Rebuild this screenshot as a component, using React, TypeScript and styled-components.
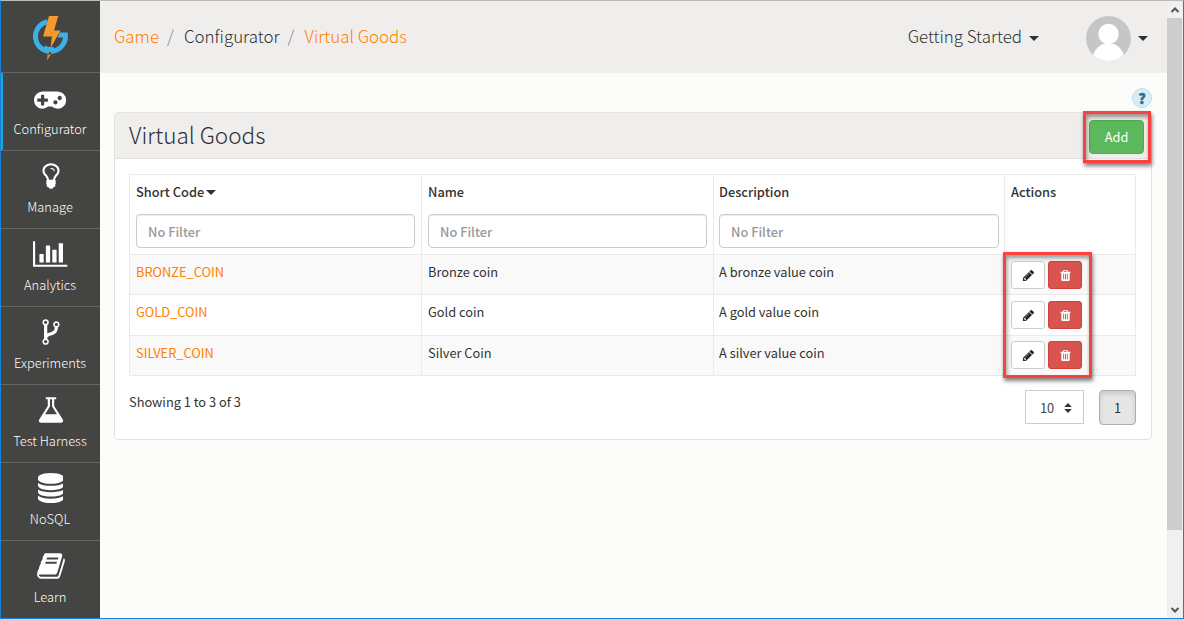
import React from 'react';
import styled, { createGlobalStyle } from 'styled-components';

const Global = createGlobalStyle`
  * { box-sizing: border-box; }
  body {
    margin: 0;
    overflow: hidden;
    font-family: "Noto Sans CJK SC", "Open Sans", sans-serif;
    font-size: 12.8px;
    color: #333;
  }
`;

const Frame = styled.div`
  display: flex;
  width: 1184px;
  height: 619px;
  border: 1px solid #1683d8;
  border-top-color: #bcbab9;
  background: #fcfcfb;
`;

const Sidebar = styled.nav`
  width: 99px;
  flex: none;
  background: #444442;
  overflow: hidden;
`;

const LogoBox = styled.div`
  height: 71px;
  display: flex;
  justify-content: center;
  padding: 13px 0 0;
`;

const NavItem = styled.a<{ $active?: boolean }>`
  height: 78px;
  display: flex;
  flex-direction: column;
  align-items: center;
  border-top: 1px solid #646462;
  padding: 10px 0 0;
  color: #fcfcfb;
  box-shadow: ${p => (p.$active ? 'inset 2px 0 0 #1ba3e0' : 'none')};
  svg { height: 30px; fill: #fff; }
`;

const NavLabel = styled.span`
  font-size: 12.9px;
  line-height: 20px;
  margin: 6px 1px 0 0;
  font-weight: 300;
  white-space: nowrap;
`;

const Main = styled.main`
  flex: 1;
  min-width: 0;
`;

const TopBar = styled.header`
  height: 72px;
  background: #f0eeed;
  display: flex;
  align-items: center;
  justify-content: space-between;
  padding: 0 19px 0 14px;
  font-size: 16.9px;
  font-weight: 300;
`;

const Crumbs = styled.div`
  display: flex;
  line-height: 24px;
  padding-bottom: 2px;
  white-space: pre;
`;

const Crumb = styled.span<{ $link?: boolean }>`
  color: ${p => (p.$link ? '#ff7f00' : '#2c3135')};
`;

const Slash = styled.span`
  color: #888;
  width: 25px;
  padding-left: 8px;
`;

const UserArea = styled.div`
  display: flex;
  align-items: center;
  height: 72px;
  padding-top: 3px;
`;

const StartMenu = styled.div`
  display: flex;
  align-items: center;
  gap: 7px;
  line-height: 24px;
  margin-right: 47px;
  span { padding-bottom: 5px; }
`;

const Caret = styled.i`
  border: 5px solid transparent;
  border-top-color: #2c3135;
  border-bottom: 0;
`;

const Avatar = styled.svg`
  width: 45px;
  height: 45px;
  margin-right: 7px;
`;

const Content = styled.section`
  padding: 15px 15px 0 14px;
`;

const HelpRow = styled.div`
  display: flex;
  justify-content: flex-end;
  height: 24px;
`;

const Help = styled.span`
  width: 20px;
  height: 20px;
  border-radius: 50%;
  border: 1px solid #bce0ef;
  background: #d9edf7;
  color: #31708f;
  font-size: 14px;
  font-weight: 900;
  line-height: 18px;
  text-align: center;
  -webkit-text-stroke: 0.5px #31708f;
`;

const Panel = styled.div`
  height: 328px;
  border: 1px solid #e4e2e1;
  border-radius: 4px;
  background: #fff;
`;

const PanelHead = styled.div`
  height: 46px;
  background: #f0eeed;
  border-bottom: 1px solid #e4e2e1;
  display: flex;
  justify-content: space-between;
  padding: 7px 7px 0 14px;
`;

const Title = styled.h1`
  margin: 0;
  font-size: 22.5px;
  font-weight: 300;
  line-height: 28px;
  color: #2c3135;
`;

const Marked = styled.div`
  position: relative;
  align-self: flex-start;
`;

const Callout = styled.div<{ $box: string }>`
  position: absolute;
  inset: ${p => p.$box};
  border: 3px solid #fb4040;
  box-shadow: 1px 3px 4px rgba(0, 0, 0, 0.5), inset 1px 3px 4px rgba(0, 0, 0, 0.4);
  pointer-events: none;
`;

const AddButton = styled.button`
  display: block;
  width: 55px;
  height: 34px;
  border: 1px solid #4cae4c;
  border-radius: 4px;
  background: #5cb85c;
  color: #fff;
  font: inherit;
  padding: 0 0 2px;
`;

const Body = styled.div`
  padding: 15px 15px 0 14px;
`;

const Table = styled.div`
  position: relative;
  width: 1007px;
  border: 1px solid #eaeaea;
`;

const Row = styled.div<{ $h: number; $odd?: boolean; $first?: boolean }>`
  display: grid;
  grid-template-columns: 291px 292px 291px 131px;
  height: ${p => p.$h}px;
  background: ${p => (p.$odd ? '#f9f9f9' : '#fff')};
  border-top: ${p => (p.$first ? '0' : '1px solid #eaeaea')};
`;

const Cell = styled.div`
  padding: 6px;
  line-height: 22px;
  color: #333;
  & + & { border-left: 1px solid #eaeaea; }
  &:nth-child(3) { padding-left: 5px; padding-right: 5px; }
`;

const HeadLabel = styled.div`
  display: flex;
  align-items: center;
  gap: 2px;
  height: 22px;
  font-weight: 500;
  margin-bottom: 11px;
  white-space: nowrap;
`;

const Filter = styled.input`
  display: block;
  width: 100%;
  height: 34px;
  border: 1px solid #ccc;
  border-radius: 4px;
  padding: 0 11px;
  font: inherit;
  font-weight: 500;
  box-shadow: inset 0 1px 1px rgba(0, 0, 0, 0.075);
  &::placeholder { color: #999; opacity: 1; }
`;

const Code = styled.a`
  color: #ff7f00;
`;

const Actions = styled.div<{ $raise: boolean }>`
  display: flex;
  gap: 3px;
  margin-top: ${p => (p.$raise ? '-1px' : '0')};
`;

const IconButton = styled.button<{ $danger?: boolean }>`
  width: 34px;
  height: 28px;
  padding: 0;
  display: flex;
  align-items: center;
  justify-content: center;
  border-radius: 3px;
  border: 1px solid ${p => (p.$danger ? '#d43f3a' : '#ccc')};
  background: ${p => (p.$danger ? '#d9534f' : '#fff')};
  svg { width: 13px; height: 13px; fill: ${p => (p.$danger ? '#fff' : '#222')}; }
`;

const Footer = styled.div`
  display: flex;
  justify-content: space-between;
  padding-top: 14px;
`;

const Pager = styled.div`
  display: flex;
  gap: 15px;
`;

const Select = styled.div`
  width: 59px;
  height: 34px;
  border: 1px solid #ccc;
  display: flex;
  align-items: center;
  justify-content: space-between;
  padding: 1px 11px 0 14px;
  color: #444;
`;

const Page = styled.button`
  width: 37px;
  height: 35px;
  padding: 0 0 1px;
  border: 1px solid #adadad;
  border-radius: 4px;
  background: #e6e6e6;
  box-shadow: inset 0 3px 5px rgba(0, 0, 0, 0.125);
  font: inherit;
  color: #333;
`;

const Info = styled.div`
  line-height: 24px;
`;

const Scrollbar = styled.div`
  width: 16px;
  flex: none;
  display: flex;
  flex-direction: column;
  align-items: flex-start;
  justify-content: space-between;
  background: #f0f0f0;
  svg { width: 16px; height: 17px; fill: none; stroke: #555; stroke-width: 2; }
`;

const Thumb = styled.div`
  width: 15px;
  height: 512px;
  background: #cdcdcd;
  margin-bottom: auto;
`;

const icons = {
  gamepad: 'M832 1088v-128q0-14-9-23t-23-9h-192v-192q0-14-9-23t-23-9h-128q-14 0-23 9t-9 23v192h-192q-14 0-23 9t-9 23v128q0 14 9 23t23 9h192v192q0 14 9 23t23 9h128q14 0 23-9t9-23v-192h192q14 0 23-9t9-23zm576 64q0-53-37.5-90.5t-90.5-37.5-90.5 37.5-37.5 90.5 37.5 90.5 90.5 37.5 90.5-37.5 37.5-90.5zm256-256q0-53-37.5-90.5t-90.5-37.5-90.5 37.5-37.5 90.5 37.5 90.5 90.5 37.5 90.5-37.5 37.5-90.5zm256 128q0 212-150 362t-362 150q-192 0-338-128h-220q-146 128-338 128-212 0-362-150t-150-362 150-362 362-150h896q212 0 362 150t150 362z',
  bulb: 'M1120 576q0 13-9.5 22.5t-22.5 9.5-22.5-9.5-9.5-22.5q0-46-54-71t-106-25q-13 0-22.5-9.5t-9.5-22.5 9.5-22.5 22.5-9.5q50 0 99.5 16t87 54 37.5 90zm160 0q0-72-34.5-134t-90-101.5-123-62-136.5-22.5-136.5 22.5-123 62-90 101.5-34.5 134q0 101 68 180 10 11 30.5 33t30.5 33q128 153 141 298h228q13-145 141-298 10-11 30.5-33t30.5-33q68-79 68-180zm128 0q0 155-103 268-45 49-74.5 87t-59.5 95.5-34 107.5q47 28 47 82 0 37-25 64 25 27 25 64 0 52-45 81 13 23 13 47 0 46-31.5 71t-77.5 25q-20 44-60 70t-87 26-87-26-60-70q-46 0-77.5-25t-31.5-71q0-24 13-47-45-29-45-81 0-37 25-64-25-27-25-64 0-54 47-82-4-50-34-107.5t-59.5-95.5-74.5-87q-103-113-103-268 0-99 44.5-184.5t117-142 164-89 186.5-32.5 186.5 32.5 164 89 117 142 44.5 184.5z',
  chart: 'M640 896v512h-256v-512h256zm384-512v1024h-256v-1024h256zm1024 1152v128h-2048v-1536h128v1408h1920zm-640-896v768h-256v-768h256zm384-384v1152h-256v-1152h256z',
  fork: 'M672 1472q0-40-28-68t-68-28-68 28-28 68 28 68 68 28 68-28 28-68zm0-1152q0-40-28-68t-68-28-68 28-28 68 28 68 68 28 68-28 28-68zm640 128q0-40-28-68t-68-28-68 28-28 68 28 68 68 28 68-28 28-68zm96 0q0 52-26 96.5t-70 69.5q-2 287-226 414-67 38-203 81-128 40-169.5 71t-41.5 100v26q44 25 70 69.5t26 96.5q0 80-56 136t-136 56-136-56-56-136q0-52 26-96.5t70-69.5v-820q-44-25-70-69.5t-26-96.5q0-80 56-136t136-56 136 56 56 136q0 52-26 96.5t-70 69.5v497q54-26 154-57 55-17 87.5-29.5t70.5-31 59-39.5 40.5-51 28-69.5 8.5-91.5q-44-25-70-69.5t-26-96.5q0-80 56-136t136-56 136 56 56 136z',
  flask: 'M1591 1448q56 89 21.5 152.5t-140.5 63.5h-1152q-106 0-140.5-63.5t21.5-152.5l503-793v-399h-64q-26 0-45-19t-19-45 19-45 45-19h512q26 0 45 19t19 45-19 45-45 19h-64v399zm-779-725l-272 429h712l-272-429-20-31v-436h-128v436z',
  database: 'M768 768q237 0 443-43t325-127v170q0 69-103 128t-280 93.5-385 34.5-385-34.5-280-93.5-103-128v-170q119 84 325 127t443 43zm0 768q237 0 443-43t325-127v170q0 69-103 128t-280 93.5-385 34.5-385-34.5-280-93.5-103-128v-170q119 84 325 127t443 43zm0-384q237 0 443-43t325-127v170q0 69-103 128t-280 93.5-385 34.5-385-34.5-280-93.5-103-128v-170q119 84 325 127t443 43zm0-1152q208 0 385 34.5t280 93.5 103 128v128q0 69-103 128t-280 93.5-385 34.5-385-34.5-280-93.5-103-128v-128q0-69 103-128t280-93.5 385-34.5z',
  book: 'M1703 478q40 57 18 129l-275 906q-19 64-76.5 107.5t-122.5 43.5h-923q-77 0-148.5-53.5t-99.5-131.5q-24-67-2-127 0-4 3-27t4-37q1-8-3-21.5t-3-19.5q2-11 8-21t16.5-23.5 16.5-23.5q23-38 45-91.5t30-91.5q3-10 .5-30t-.5-28q3-11 17-28t17-23q21-36 42-92t25-90q1-9-2.5-32t.5-28q4-13 22-30.5t22-22.5q19-26 42.5-84.5t27.5-96.5q1-8-3-25.5t-2-26.5q2-8 9-18t18-23 17-21q8-12 16.5-30.5t15-35 16-36 19.5-32 26.5-23.5 36-11.5 47.5 5.5l-1 3q38-9 51-9h761q74 0 114 56t18 130l-274 906q-36 119-71.5 153.5t-128.5 34.5h-869q-27 0-38 15-11 16-1 43 24 70 144 70h923q29 0 56-15.5t35-41.5l300-987q7-22 5-57 38 15 59 43zm-1064 2q-4 13 2 22.5t20 9.5h608q13 0 25.5-9.5t16.5-22.5l21-64q4-13-2-22.5t-20-9.5h-608q-13 0-25.5 9.5t-16.5 22.5zm-83 256q-4 13 2 22.5t20 9.5h608q13 0 25.5-9.5t16.5-22.5l21-64q4-13-2-22.5t-20-9.5h-608q-13 0-25.5 9.5t-16.5 22.5z',
  pencil: 'M491 1536l91-91-235-235-91 91v107h128v128h107zm523-928q0-22-22-22-10 0-17 7l-542 542q-7 7-7 17 0 22 22 22 10 0 17-7l542-542q7-7 7-17zm-54-192l416 416-832 832h-416v-416zm683 96q0 53-37 90l-166 166-416-416 166-165q36-38 90-38 53 0 91 38l235 234q37 39 37 91z',
  trash: 'M704 1376v-704q0-14-9-23t-23-9h-64q-14 0-23 9t-9 23v704q0 14 9 23t23 9h64q14 0 23-9t9-23zm256 0v-704q0-14-9-23t-23-9h-64q-14 0-23 9t-9 23v704q0 14 9 23t23 9h64q14 0 23-9t9-23zm256 0v-704q0-14-9-23t-23-9h-64q-14 0-23 9t-9 23v704q0 14 9 23t23 9h64q14 0 23-9t9-23zm-544-992h448l-48-117q-7-9-17-11h-317q-10 2-17 11zm928 32v64q0 14-9 23t-23 9h-96v948q0 83-47 143.5t-113 60.5h-832q-66 0-113-58.5t-47-141.5v-952h-96q-14 0-23-9t-9-23v-64q0-14 9-23t23-9h309l70-167q15-37 54-63t79-26h320q40 0 79 26t54 63l70 167h309q14 0 23 9t9 23z',
};

type IconName = keyof typeof icons;

const Icon = ({ name, w = 1792 }: { name: IconName; w?: number }) => (
  <svg viewBox={`0 0 ${w} 1792`}><path d={icons[name]} /></svg>
);

const nav: { label: string; icon: IconName; w?: number }[] = [
  { label: 'Configurator', icon: 'gamepad', w: 1920 },
  { label: 'Manage', icon: 'bulb' },
  { label: 'Analytics', icon: 'chart', w: 2048 },
  { label: 'Experiments', icon: 'fork' },
  { label: 'Test Harness', icon: 'flask' },
  { label: 'NoSQL', icon: 'database', w: 1536 },
  { label: 'Learn', icon: 'book' },
];

const goods = [
  { code: 'BRONZE_COIN', name: 'Bronze coin', text: 'A bronze value coin', h: 40 },
  { code: 'GOLD_COIN', name: 'Gold coin', text: 'A gold value coin', h: 41 },
  { code: 'SILVER_COIN', name: 'Silver Coin', text: 'A silver value coin', h: 40 },
];

export default function App() {
  return (
    <Frame>
      <Global />
      <Sidebar>
        <LogoBox>
          <svg width="38" height="48" viewBox="0 0 38 48">
            <path d="M15.5 7.7A15 15 0 1 0 33.4 21H24" fill="none" stroke="#3fb0e6" strokeWidth="5" />
            <path d="M17 2h9.500l-4 13.500h6.500L16 46l2.500-18.500-8.500-1z" fill="#444442" />
            <path d="M17 2h9.300l-4.300 14.500h6.500L18.500 34l1.500-11.500h-9z" fill="#f79a2d" />
            <path d="M12 33.500Q16 36.500 22 35.200" fill="none" stroke="#3fb0e6" strokeWidth="5" />
            <path d="M15.500 40.500h3.500l-4 6z" fill="#d8882e" />
          </svg>
        </LogoBox>
        {nav.map((n, i) => (
          <NavItem key={n.label} $active={i === 0}>
            <Icon name={n.icon} w={n.w} />
            <NavLabel>{n.label}</NavLabel>
          </NavItem>
        ))}
      </Sidebar>
      <Main>
        <TopBar>
          <Crumbs>
            <Crumb $link>Game</Crumb><Slash>/</Slash>
            <Crumb>Configurator</Crumb><Slash>/</Slash>
            <Crumb $link>Virtual Goods</Crumb>
          </Crumbs>
          <UserArea>
            <StartMenu><span>Getting Started</span><Caret /></StartMenu>
            <Avatar viewBox="0 0 45 45">
              <clipPath id="face"><circle cx="22.500" cy="22.500" r="22.500" /></clipPath>
              <g clipPath="url(#face)">
                <rect width="45" height="45" fill="#c6c6c6" />
                <circle cx="22.500" cy="18" r="10.200" fill="#fff" />
                <path d="M5 45C8 33 14 27 22.500 27S37 33 40 45z" fill="#fff" />
              </g>
            </Avatar>
            <Caret />
          </UserArea>
        </TopBar>
        <Content>
          <HelpRow><Help>?</Help></HelpRow>
          <Panel>
            <PanelHead>
              <Title>Virtual Goods</Title>
              <Marked>
                <AddButton>Add</AddButton>
                <Callout $box="-9px -7px -9px -6px" />
              </Marked>
            </PanelHead>
            <Body>
              <Table>
                <Row $h={79} $first>
                  <Cell><HeadLabel>Short Code<Caret /></HeadLabel><Filter placeholder="No Filter" /></Cell>
                  <Cell><HeadLabel>Name</HeadLabel><Filter placeholder="No Filter" /></Cell>
                  <Cell><HeadLabel>Description</HeadLabel><Filter placeholder="No Filter" /></Cell>
                  <Cell><HeadLabel>Actions</HeadLabel></Cell>
                </Row>
                {goods.map((g, i) => (
                  <Row key={g.code} $h={g.h} $odd={i % 2 === 0}>
                    <Cell><Code>{g.code}</Code></Cell>
                    <Cell>{g.name}</Cell>
                    <Cell>{g.text}</Cell>
                    <Cell>
                      <Actions $raise={i === 2}>
                        <IconButton><Icon name="pencil" /></IconButton>
                        <IconButton $danger><Icon name="trash" /></IconButton>
                      </Actions>
                    </Cell>
                  </Row>
                ))}
                <Callout $box="77px 43px -3px 873px" />
              </Table>
              <Footer>
                <Info>Showing 1 to 3 of 3</Info>
                <Pager>
                  <Select>
                    10
                    <svg width="8" height="10" viewBox="0 0 8 10" fill="#333"><path d="M4 0l3.800 4H.2zM4 10L.2 6h7.600z" /></svg>
                  </Select>
                  <Page>1</Page>
                </Pager>
              </Footer>
            </Body>
          </Panel>
        </Content>
      </Main>
      <Scrollbar>
        <svg viewBox="0 0 16 17"><path d="M4.500 11L8 7.500 11.500 11" /></svg>
        <Thumb />
        <svg viewBox="0 0 16 17"><path d="M4.500 7L8 10.500 11.500 7" /></svg>
      </Scrollbar>
    </Frame>
  );
}
